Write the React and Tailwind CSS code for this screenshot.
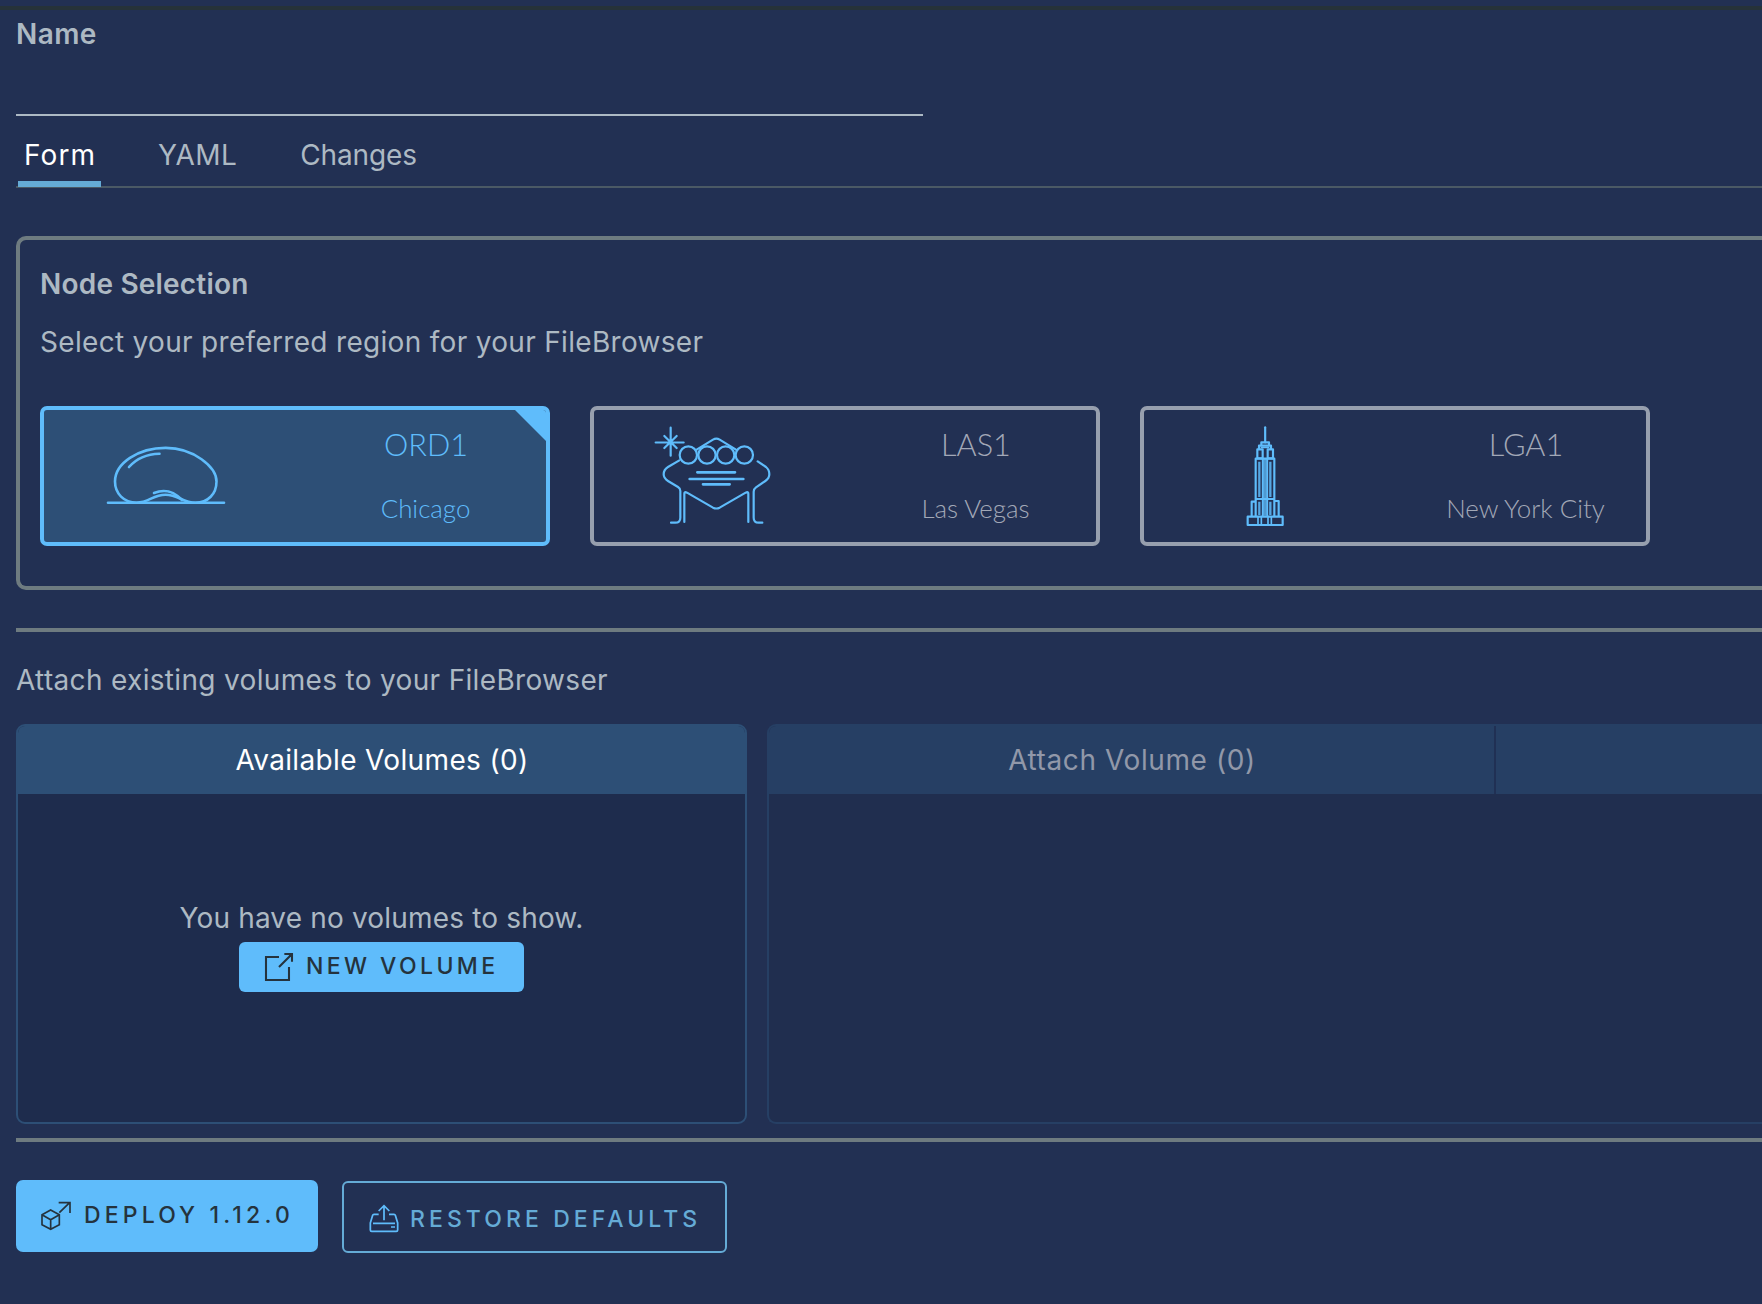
import React from "react";

function BeanIcon() {
  return (
    <svg width="150" height="120" viewBox="0 0 150 120" fill="none" stroke="#5fbcfb" strokeWidth="2.6" strokeLinecap="round">
      <path d="M46.5 87.7C34 87.7 25 78.5 25 66.5C25 48.5 48 32.9 75.7 32.9C103.5 32.9 126.5 52 126.5 66.5C126.5 79 118 87.7 105.5 87.7C92.5 87.7 88.5 79.7 75.5 79.7C62.5 79.7 59.5 87.7 46.5 87.7Z" />
      <path d="M39 52C46 44 57 39 69.5 38.7" />
      <path d="M64 78C73 74.5 82 74.5 92 85" />
      <path d="M18 87.7H134" />
    </svg>
  );
}

function VegasIcon() {
  return (
    <svg width="150" height="120" viewBox="0 0 450 360" fill="none" stroke="#5fbcfb" strokeWidth="6.6" strokeLinecap="round" strokeLinejoin="round">
      <path d="M92 38V122M47 82.5H131M73 63L110 99M110 63L73 99" />
      <circle cx="145" cy="120" r="26" />
      <circle cx="201" cy="120" r="26" />
      <circle cx="257" cy="120" r="26" />
      <circle cx="313" cy="120" r="26" />
      <path d="M170 104L219 74Q229 68 239 74L288 104" />
      <path d="M118 136L84 156Q71 164 71 178Q71 190 84 198L114 216Q121 220 121 228V308Q121 323 106 323H93" />
      <path d="M353 139L378 156Q388 164 388 178Q388 190 376 198L348 217Q341 222 341 230V308Q341 323 356 323H367" />
      <path d="M133 321V236Q133 229 141 233L219 278Q229 283 239 278L317 233Q325 229 325 236V321" />
      <g strokeWidth="8">
        <path d="M172 172H285M149 192H310M189 208H269" />
      </g>
    </svg>
  );
}

function EmpireIcon() {
  return (
    <svg width="70" height="120" viewBox="0 0 210 360" fill="none" stroke="#5fbcfb" strokeWidth="6.5" strokeLinejoin="round">
      <rect x="99" y="132" width="12" height="170" fill="#5fbcfb" fillOpacity="0.75" stroke="none" />
      <path d="M105.500 37V82" strokeLinecap="round" />
      <path d="M94 91V82H117V91" />
      <path d="M87 103V92H123V103" />
      <path d="M92 97H118" strokeWidth="5" />
      <rect x="82" y="103" width="16" height="27" />
      <rect x="113" y="103" width="16" height="27" />
      <path d="M77 303V131H133V303M77 252H133" />
      <path d="M98 131V303M112 131V303" strokeWidth="5" />
      <path d="M88 140V246M121 140V246M88 260V300M121 260V300" strokeWidth="7" strokeOpacity="0.85" />
      <path d="M77 260H65V303M133 258H146V303" />
      <rect x="53" y="305" width="105" height="25" />
      <path d="M84 305V330M94 305V330M114 305V330M124 305V330" strokeWidth="5" />
    </svg>
  );
}

function ExternalIcon() {
  return (
    <svg className="shrink-0" width="30" height="30" viewBox="312 216 90 90" fill="none" stroke="#25333d" strokeWidth="6.2">
      <path d="M357 231H318V300H387V261" />
      <path d="M357 261L393 225M373 222H396V245" />
      <path d="M383 222H396V235Z" fill="#25333d" stroke="none" />
    </svg>
  );
}

function DeployIcon() {
  return (
    <svg className="shrink-0" width="32" height="32" viewBox="12 30 96 96" fill="none" stroke="#25333d" strokeWidth="5">
      <path d="M44 60L70 74V104L44 118L18 104V74ZM18 74L44 89L70 74M44 89V118" />
      <path d="M70 68L101 38M68 38H102V69" />
    </svg>
  );
}

function RestoreIcon() {
  return (
    <svg className="shrink-0" width="32" height="32" viewBox="996 36 96 96" fill="none" stroke="#5fbcfb" strokeWidth="5.2">
      <path d="M1028 70H1014Q1011 70 1010 73L1003 96V117Q1003 121 1007 121H1081Q1085 121 1085 117V96L1078 73Q1077 70 1074 70H1059" />
      <path d="M1011 97H1077M1065 108H1077" />
      <path d="M1044 88V45M1028 60L1044 44L1060 60" />
    </svg>
  );
}

function RegionCard({ code, city, icon, iconClass, selected }) {
  return (
    <div
      className={
        "relative flex h-[140px] w-[510px] justify-between overflow-hidden rounded-[7px] border-4 " +
        (selected ? "border-[#5fbcfb] bg-[#2d4f76] text-[#5fbcfb]" : "border-[#979fae] text-[#a2a8b7]")
      }
    >
      <div className={"pt-[5px] " + iconClass}>{icon}</div>
      <div className="flex w-[241px] flex-col items-center gap-[30px] whitespace-nowrap pt-[17px] font-['Lato',sans-serif] font-light">
        <div className="pl-px text-[30.7px] leading-9">{code}</div>
        <div className="text-[25.9px] leading-[30px]">{city}</div>
      </div>
      {selected && (
        <div className="absolute right-0 top-0 h-[31px] w-[31px] bg-[#5fbcfb] [clip-path:polygon(0_0,100%_0,100%_100%)]" />
      )}
    </div>
  );
}

export default function App() {
  return (
    <div className="h-[1304px] w-full overflow-hidden whitespace-nowrap bg-[#223053] pt-1.5 font-['Inter',sans-serif] text-[28px] leading-[34px] text-[#adb9c3]">
      <div className="h-1 bg-[#263239]" />
      <div className="pl-4">
        <div className="h-[104px] pt-[7px] font-semibold tracking-[0.4px]">Name</div>
        <div className="h-0.5 w-[907px] bg-[#adb9c4]" />

        <div className="flex h-[72px] border-b-2 border-[#4b5965] pl-0.5">
          <div className="relative w-[83px] pl-1.5 pt-[22px] tracking-[1.1px] text-white">
            Form
            <div className="absolute -bottom-px left-0 h-1.5 w-full bg-[#65abd6]" />
          </div>
          <div className="ml-[57px] pt-[22px] tracking-[0.45px]">YAML</div>
          <div className="ml-[63px] pt-[22px] tracking-[-0.13px]">Changes</div>
        </div>

        <div className="mt-12 h-[354px] rounded-l-[10px] border-4 border-r-0 border-[#6e7b80] pl-5 pt-[27px]">
          <div className="font-semibold tracking-[0.2px]">Node Selection</div>
          <div className="mt-6 tracking-[0.31px]">Select your preferred region for your FileBrowser</div>
          <div className="mt-[47px] flex gap-10">
            <RegionCard selected code="ORD1" city="Chicago" icon={<BeanIcon />} iconClass="pl-[46px]" />
            <RegionCard code="LAS1" city="Las Vegas" icon={<VegasIcon />} iconClass="pl-[46px]" />
            <RegionCard code="LGA1" city="New York City" icon={<EmpireIcon />} iconClass="pl-[86px]" />
          </div>
        </div>

        <div className="mt-[38px] h-1 bg-[#6e7b80]" />
        <div className="mt-[31px] tracking-[0.33px]">Attach existing volumes to your FileBrowser</div>

        <div className="mt-[27px] flex h-[400px] gap-5">
          <div className="flex w-[731px] flex-col overflow-hidden rounded-[9px] border-2 border-[#2d4f76] bg-[#1e2c4d]">
            <div className="h-[68px] bg-[#2d4f76] pl-px pt-[17px] text-center tracking-[0.35px] text-white">Available Volumes (0)</div>
            <div className="flex flex-col items-center pt-[107px]">
              <div className="tracking-[0.17px]">You have no volumes to show.</div>
              <button className="mt-[7px] flex h-[50px] w-[285px] items-center gap-3 rounded-[6px] bg-[#5fbcfb] pl-[25px] text-[23px] font-medium tracking-[3.4px] text-[#25333d]">
                <ExternalIcon />
                <span className="pb-[3px]">NEW VOLUME</span>
              </button>
            </div>
          </div>
          <div className="flex-1 overflow-hidden rounded-l-[9px] border-2 border-r-0 border-[#263f64] bg-[#202e4f]">
            <div className="flex h-[68px] bg-[#263f64]">
              <div className="w-[727px] border-r-2 border-[#203054] pl-px pt-[17px] text-center tracking-[0.6px] text-[#9198a9]">
                Attach Volume (0)
              </div>
            </div>
          </div>
        </div>

        <div className="mt-3.5 h-1 bg-[#6e7b80]" />

        <div className="mt-[38px] flex items-start gap-6 text-[23px] font-medium">
          <button className="flex h-[72px] w-[302px] items-center gap-[13px] rounded-[7px] bg-[#5fbcfb] pl-6 tracking-[4.15px] text-[#25333d]">
            <DeployIcon />
            <span className="-ml-px pb-[3px]">DEPLOY 1.12.0</span>
          </button>
          <button className="mt-px flex h-[72px] w-[385px] items-center gap-2.5 rounded-[6px] border-2 border-[#65abd6] pl-6 pt-[3px] tracking-[4.08px] text-[#65abd6]">
            <RestoreIcon />
            <span>RESTORE DEFAULTS</span>
          </button>
        </div>
      </div>
    </div>
  );
}
